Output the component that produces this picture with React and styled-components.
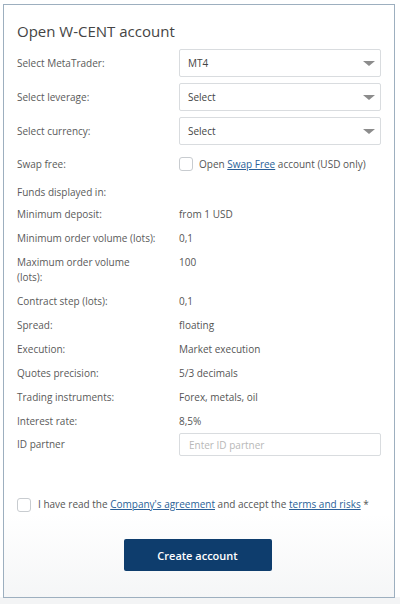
import React from 'react';
import styled, { createGlobalStyle } from 'styled-components';

const GlobalStyle = createGlobalStyle`
  html, body {
    margin: 0;
    padding: 0;
    background: #fff;
  }
  body {
    font-family: "Open Sans", "Liberation Sans", sans-serif;
    color: #555;
  }
`;

const Page = styled.div`
  width: 400px;
  height: 604px;
  padding: 4px 0 0 3px;
  box-sizing: border-box;
  background: linear-gradient(to bottom, #fff 597px, #f3f4f5 597px);
`;

const Panel = styled.div`
  width: 392px;
  height: 594px;
  box-sizing: border-box;
  border: 1px solid #9dafbf;
  background: linear-gradient(to bottom, #fff 0%, #fff 86%, #f5f6f7 100%);
  padding: 15px 13px 0 13px;
  display: flex;
  flex-direction: column;
`;

const Title = styled.h2`
  margin: 0 0 7px 0;
  font-size: 15px;
  font-weight: 400;
  color: #444;
  line-height: 22px;
`;

const Row = styled.div`
  display: grid;
  grid-template-columns: 162px 202px;
  align-items: ${p => (p.$top ? 'start' : 'center')};
  height: ${p => p.$h || 24}px;
  margin-top: ${p => p.$before || 0}px;
  margin-bottom: ${p => p.$gap || 0}px;
`;

const Label = styled.div`
  max-width: 139px;
  font-size: 10px;
  line-height: 15px;
  color: #5a5a5a;
`;

const Value = styled.div`
  font-size: 10px;
  line-height: 15px;
  color: #555;
`;

const SelectBox = styled.div`
  height: 28px;
  box-sizing: border-box;
  border: 1px solid #d9dcdf;
  border-radius: 2px;
  display: flex;
  align-items: center;
  justify-content: space-between;
  padding: 0 5px 0 8px;
  font-size: 10px;
  color: #444;
  background: #fff;
`;

const Caret = styled.span`
  width: 0;
  height: 0;
  border-left: 6px solid transparent;
  border-right: 6px solid transparent;
  border-top: 5px solid #8c8c8c;
`;

const Input = styled.div`
  height: 23px;
  box-sizing: border-box;
  border: 1px solid #d9dcdf;
  border-radius: 2px;
  display: flex;
  align-items: center;
  padding: 0 9px;
  font-size: 10px;
  color: #b8b8b8;
`;

const CheckLine = styled.label`
  display: flex;
  align-items: center;
  gap: ${p => p.$gap || 6}px;
  font-size: 10px;
  line-height: 15px;
  color: #555;
`;

const Box = styled.span`
  width: 14px;
  height: 14px;
  box-sizing: border-box;
  border: 1px solid #c8ccd0;
  border-radius: 3px;
  background: #fff;
  flex-shrink: 0;
`;

const Link = styled.a`
  color: #2a5f98;
  text-decoration: underline;
`;

const Agreement = styled.div`
  margin-top: 41px;
`;

const ButtonWrap = styled.div`
  display: flex;
  justify-content: center;
  margin-top: 27px;
  padding-right: 3px;
`;

const Button = styled.button`
  width: 148px;
  height: 32px;
  border: none;
  border-radius: 2px;
  background: #0e3d6d;
  color: #fff;
  font-family: "Open Sans", "Liberation Sans", sans-serif;
  font-size: 11px;
  font-weight: 600;
`;

const Select = ({ value }) => (
  <SelectBox>
    <span>{value}</span>
    <Caret />
  </SelectBox>
);

// label, value, row height
const info = [
  ['Minimum deposit:', 'from 1 USD', 24],
  ['Minimum order volume (lots):', '0,1', 24],
  ['Maximum order volume (lots):', '100', 39],
  ['Contract step (lots):', '0,1', 24],
  ['Spread:', 'floating', 24],
  ['Execution:', 'Market execution', 24],
  ['Quotes precision:', '5/3 decimals', 24],
  ['Trading instruments:', 'Forex, metals, oil', 24],
  ['Interest rate:', '8,5%', 19],
];

export default function App() {
  return (
    <Page>
      <GlobalStyle />
      <Panel>
        <Title>Open W-CENT account</Title>
        <Row $h={28} $gap={6}>
          <Label>Select MetaTrader:</Label>
          <Select value="MT4" />
        </Row>
        <Row $h={28} $gap={6}>
          <Label>Select leverage:</Label>
          <Select value="Select" />
        </Row>
        <Row $h={28} $gap={7}>
          <Label>Select currency:</Label>
          <Select value="Select" />
        </Row>
        <Row $h={24}>
          <Label>Swap free:</Label>
          <CheckLine>
            <Box />
            <span>Open <Link>Swap Free</Link> account (USD only)</span>
          </CheckLine>
        </Row>
        <Row $top $h={22} $before={9}>
          <Label>Funds displayed in:</Label>
          <Value />
        </Row>
        {info.map(([k, v, h]) => (
          <Row key={k} $top $h={h}>
            <Label>{k}</Label>
            <Value>{v}</Value>
          </Row>
        ))}
        <Row $h={23}>
          <Label>ID partner</Label>
          <Input>Enter ID partner</Input>
        </Row>
        <Agreement>
          <CheckLine $gap={7}>
            <Box />
            <span>
              I have read the <Link>Company's agreement</Link> and accept the{' '}
              <Link>terms and risks</Link> *
            </span>
          </CheckLine>
        </Agreement>
        <ButtonWrap>
          <Button>Create account</Button>
        </ButtonWrap>
      </Panel>
    </Page>
  );
}
